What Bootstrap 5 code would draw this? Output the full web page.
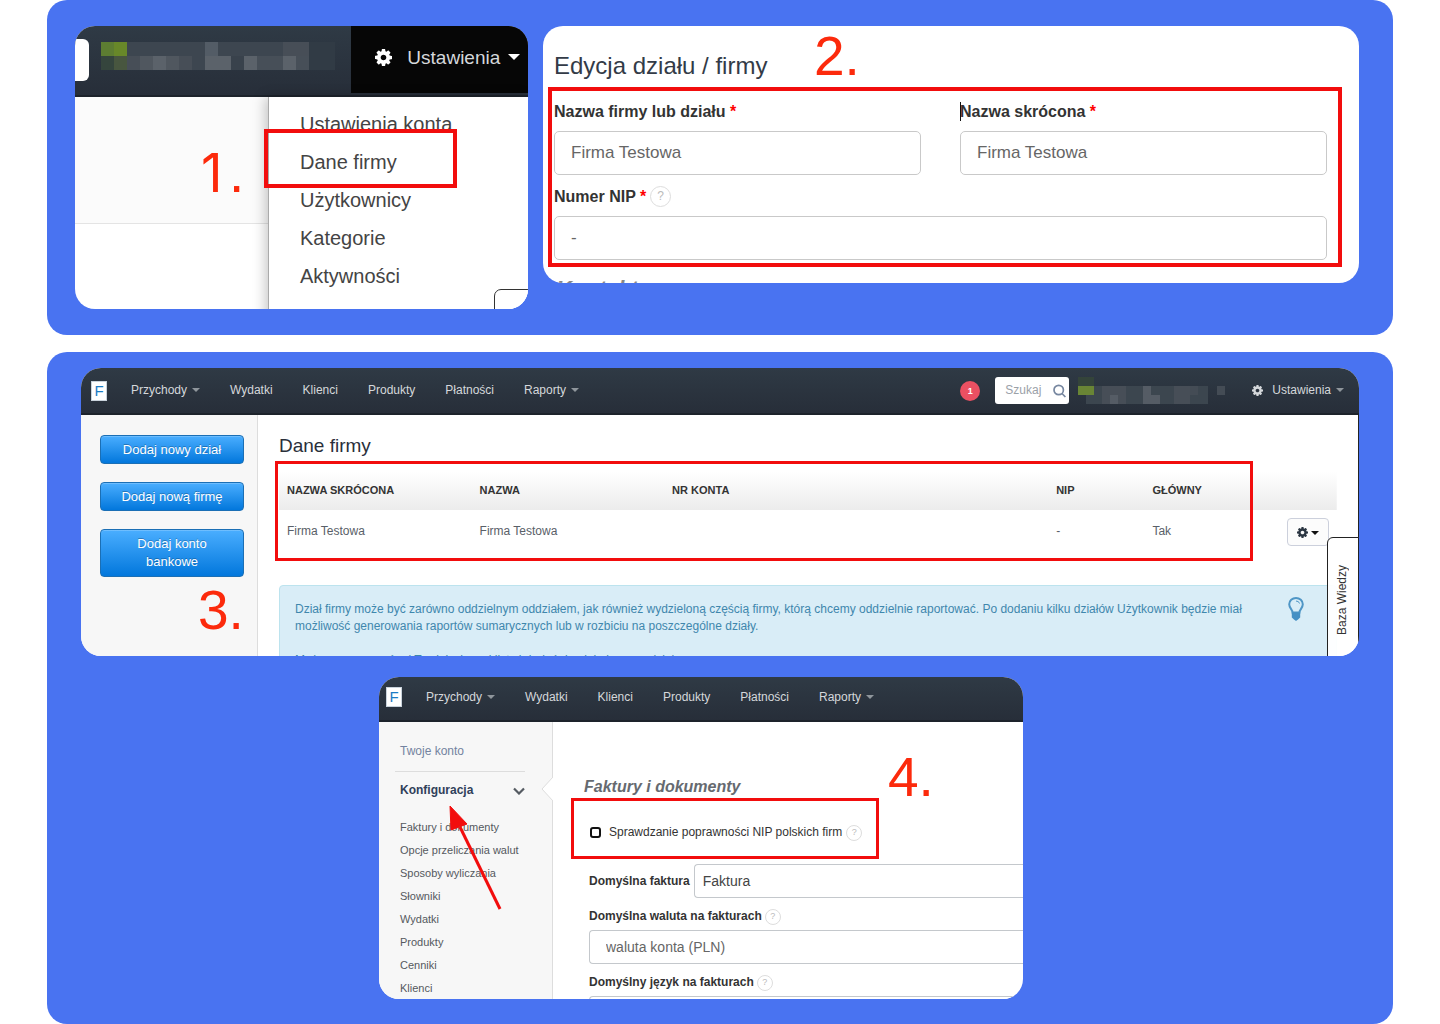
<!DOCTYPE html>
<html lang="pl">
<head>
<meta charset="utf-8">
<meta name="viewport" content="width=device-width, initial-scale=1">
<title>Dane firmy – instrukcja</title>
<link href="https://cdn.jsdelivr.net/npm/bootstrap@5.3.0/dist/css/bootstrap.min.css" rel="stylesheet">
<style>
  body { font-family: "Liberation Sans", Arial, sans-serif; font-size: 12px; line-height: 17px; color: #333; background: #fff; }
  .guide { padding: 0 47px; display: flex; flex-direction: column; gap: 17px; }
  .panel { background: #4973f1; border-radius: 20px; }
  .panel-top { padding: 26px 34px 26px 28px; gap: 15px; }
  .panel-bottom { padding: 16px 34px 25px; gap: 21px; }
  .shot { position: relative; overflow: hidden; background: #fff; border-radius: 20px; }
  .shot-menu { flex: 453 1 0; height: 283px; }
  .shot-form { flex: 816 1 0; height: 257px; }
  .shot-table { height: 288px; }
  .shot-config { width: 644px; height: 322px; margin-right: 38px; }
  .frame { position: absolute; border: 3px solid #f20d0d; pointer-events: none; }
  .frame-thick { border-width: 4px; }
  .step { position: absolute; font-size: 55px; line-height: 60px; color: #fc2a0c; }
  .step-one { display: inline-block; width: 28px; font-family: Inter, sans-serif; font-size: 53px; line-height: 53px; }
  .bar { background: linear-gradient(#2f3a45, #272e39); border-bottom: 2px solid #1d232b; color: #d5d8db; }
  .bar a { color: inherit; text-decoration: none; }
  .tri { display: inline-block; border: 4px solid transparent; border-top-color: #8f969c; border-bottom: 0; margin-left: 5px; vertical-align: 2px; }

  /* step 1 */
  .bar-big { height: 71px; }
  .search-stub { width: 14px; height: 42px; margin-top: 13px; background: #fff; border-radius: 0 6px 6px 0; }
  .mosaic-big { margin: 16px 0 0 12px; }
  .settings-open { background: #060606; color: #eee; font-size: 19px; width: 39%; height: 67px; padding-left: 24px; padding-bottom: 5px; }
  .settings-open svg { margin-right: 15px; color: #fff; }
  .settings-open .tri { border-width: 6px; border-bottom: 0; border-top-color: #fff; margin-left: 8px; vertical-align: 4px; }
  .page-left { width: 42.6%; }
  .page-band { height: 127px; background: #fbfbfb; border-bottom: 1px solid #e4e4e4; }
  .menu-drop { width: 57.4%; background: #fff; border-left: 1px solid #aaa; box-shadow: -3px 0 12px rgba(0,0,0,.22); padding: 8px 0 0 31px; height: 230px; font-size: 20px; line-height: 38px; }
  .menu-drop a { color: #444; text-decoration: none; display: block; }
  .corner-tab { position: absolute; right: -8px; bottom: -8px; width: 42px; height: 28px; border: 1px solid #333; border-radius: 7px; background: #fff; }

  /* step 2 */
  .shot-form form { padding: 25px 32px 0 11px; }
  .shot-form h2 { font-size: 24px; line-height: 30px; margin: 0 0 21px; color: #333b47; }
  .shot-form label { font-size: 16px; line-height: 20px; font-weight: 700; color: #333; }
  .shot-form .form-control { height: 44px; margin-top: 9px; padding: 0 16px; border: 1px solid #c9c9c9; border-radius: 5px; color: #666; font-size: 17px; }
  .field-row { gap: 39px; margin-bottom: 11px; }
  .req { color: #f00; }
  .caret-mark { position: absolute; width: 1px; height: 19px; background: #111; top: 0; left: 0; }
  .hint { display: inline-flex; align-items: center; justify-content: center; width: 16px; height: 16px; border: 1px solid #ddd; border-radius: 50%; color: #bbb; font-size: 9px; line-height: 9px; font-weight: 400; background: #fff; padding: 0; }
  .shot-form .hint { width: 21px; height: 21px; font-size: 12px; margin: 0 0 0 4px; }
  .cut-heading { font-size: 22px; line-height: 26px; font-weight: 700; font-style: italic; color: #888; margin: 16px 0 0 2px; }

  /* step 3 */
  .bar-app { height: 47px; padding: 0 15px 0 10px; }
  .logo-f { width: 16px; height: 20px; background: #fff; border: 1px solid #c9d3dc; color: #1c7cc4; font-size: 15px; line-height: 18px; text-align: center; margin-right: 24px; }
  .links { gap: 30px; }
  .alert-dot { width: 20px; height: 20px; border-radius: 50%; background: #eb5062; color: #fff; font-size: 9px; font-weight: 700; line-height: 20px; text-align: center; margin-right: 15px; }
  .search-box { width: 74px; height: 27px; background: #fff; border-radius: 3px; padding: 0 3px 0 10px; margin-right: 9px; }
  .search-box input { border: 0; padding: 0; width: 44px; color: #999; background: transparent; font-size: 12px; }
  .search-box input::placeholder { color: #9ba1a8; opacity: 1; }
  .settings-link { gap: 9px; }
  .side { background: #f7f7f7; border-right: 1px solid #ddd; }
  .side-buttons { width: 177px; padding: 20px 13px 0 19px; gap: 18px; }
  .btn-blue { background: linear-gradient(#4aaeff, #0277dc); border: 1px solid #1b6fb5; border-radius: 4px; color: #fff; font-size: 13px; line-height: 18px; padding: 5px 16px 4px; text-shadow: 0 -1px 0 rgba(0,0,0,.25); box-shadow: inset 0 1px 0 rgba(255,255,255,.2); }
  .btn-tall { padding: 5px 24px; }
  .shot-table .side { height: 241px; }
  .main-table { padding: 20px 21px 0; border-right: 1px solid #222; }
  .main-table h2 { font-size: 19px; line-height: 22px; color: #2a2f3a; margin: 0 0 15px; }
  .firms { width: 100%; table-layout: fixed; }
  .firms th { height: 38px; padding: 0 8px 2px; font-size: 11px; color: #333; vertical-align: middle; }
  .firms thead { background: linear-gradient(#fff, #ececec); }
  .firms td { height: 43px; padding: 0 8px; color: #596068; vertical-align: middle; }
  .firms td:last-child { padding: 0; }
  .gear-btn { width: 42px; height: 28px; border: 1px solid #ccd0dc; border-radius: 4px; background: #fcfcfc; padding: 0; line-height: 14px; color: #2b3642; }
  .gear-btn .tri { border-top-color: #111; margin-left: 3px; vertical-align: 1px; }
  .info { margin-top: 32px; height: 90px; background: #d9edf7; border: 1px solid #bce3ee; border-radius: 4px; color: #3f87ad; padding: 11px 32px 0 15px; }
  .info p { margin: 4px 0 17px; }
  .kb-tab { position: absolute; right: 0; bottom: -10px; width: 32px; height: 129px; border: 1px solid #222; border-radius: 6px 0 0 0; background: rgba(255,255,255,.94); color: #333; padding: 2px 2px 0 0; }
  .kb-tab span { writing-mode: vertical-rl; transform: rotate(180deg); line-height: 18px; }

  /* step 4 */
  .shot-config .bar-app { height: 45px; padding: 0 7px; }
  .shot-config .logo-f { margin-bottom: 4px; }
  .shot-config .links { margin-bottom: 2px; }
  .side-config { width: 174px; height: 277px; padding: 21px 27px 0 16px; position: relative; }
  .side-config a { display: block; color: #55595e; text-decoration: none; padding-left: 5px; }
  .side-config .acc { color: #7383a0; padding-bottom: 11px; border-bottom: 1px solid #ddd; }
  .side-config .cur { color: #30405a; font-weight: 700; display: flex; justify-content: space-between; align-items: center; margin: 10px 0 17px; }
  .side-list { font-size: 11px; line-height: 23px; }
  .notch { position: absolute; right: -1px; top: 54px; }
  .main-config { padding: 55px 0 0 31px; }
  .main-config h3 { font-size: 16px; line-height: 20px; font-weight: 700; font-style: italic; color: #666a70; margin: 0 0 27px; }
  .opts { padding-left: 5px; }
  .opts label { font-weight: 700; color: #333; }
  .opts .check-label { font-weight: 400; margin: 0 4px 0 8px; }
  .opts input[type=checkbox] { appearance: none; width: 11px; height: 11px; border: 2px solid #111; border-radius: 3px; margin: 0 0 0 1px; background: #fff; }
  .opts .form-select { height: 34px; border: 1px solid #c4c8cc; border-right: 0; border-radius: 4px 0 0 4px; background-image: none; font-size: 14px; line-height: 20px; padding: 0 8px; color: #444; }
  .opts .wide { padding-left: 16px; margin-top: 5px; color: #666; }
  .first-row { margin-top: 23px; }
  .label-row { margin-top: 10px; gap: 3px; }
  .arrow { position: absolute; left: 68px; top: 127px; }
</style>
<script src="https://cdn.jsdelivr.net/npm/bootstrap@5.3.0/dist/js/bootstrap.bundle.min.js"></script>
</head>
<body>
<svg width="0" height="0" class="position-absolute" aria-hidden="true">
  <symbol id="gear" viewBox="128 128 1536 1536"><path fill="currentColor" d="M1152 896q0-106-75-181t-181-75-181 75-75 181 75 181 181 75 181-75 75-181zm512-109v222q0 12-8 23t-20 13l-185 28q-19 54-39 91 35 50 107 138 10 12 10 25t-9 23q-27 37-99 108t-94 71q-12 0-26-9l-138-108q-44 23-91 38-16 136-29 186-7 28-36 28h-222q-14 0-24.5-8.5t-11.5-21.5l-28-184q-49-16-90-37l-141 107q-10 9-25 9-14 0-25-11-126-114-165-168-7-10-7-23 0-12 8-23 15-21 51-66.5t54-70.5q-27-50-41-99l-183-27q-13-2-21-12.5t-8-23.5v-222q0-12 8-23t19-13l186-28q14-46 39-92-40-57-107-138-10-12-10-24 0-10 9-23 26-36 98.5-107.5t94.5-71.5q13 0 26 10l138 107q44-23 91-38 16-136 29-186 7-28 36-28h222q14 0 24.5 8.5t11.5 21.5l28 184q49 16 90 37l142-107q9-9 24-9 13 0 25 10 129 119 165 170 7 8 7 22 0 12-8 23-15 21-51 66.5t-54 70.5q26 50 41 98l183 28q13 2 21 12.5t8 23.5z"/></symbol>
</svg>
<main class="guide">
  <section class="panel panel-top d-flex align-items-start">
    <div class="shot shot-menu">
      <div class="bar bar-big d-flex align-items-start">
        <div class="search-stub"></div>
        <svg class="mosaic-big" width="236" height="28" viewBox="0 0 236 28" shape-rendering="crispEdges" aria-hidden="true">
          <path fill="#3d4650" d="M26 0h182v28H26z"/><path fill="#313b45" d="M208 0h26v28h-26z"/>
          <path fill="#5d7d32" d="M0 0h13v14H0z"/><path fill="#688829" d="M13 0h13v14H13z"/>
          <path fill="#35453d" d="M0 14h13v14H0z"/><path fill="#48563f" d="M13 14h13v14H13z"/>
          <path fill="#474e57" d="M26 14h65v14H26zM182 0h26v14h-26z"/><path fill="#50575f" d="M39 14h39v14H39z"/>
          <path fill="#5b626a" d="M52 14h13v14H52zM104 14h26v14h-26zM143 14h13v14h-13zM182 14h13v14h-13z"/>
          <path fill="#535c66" d="M104 0h13v14h-13z"/><path fill="#474f58" d="M156 14h26v14h-26zM195 14h13v14h-13z"/><path fill="#39424c" d="M130 14h13v14h-13z"/>
        </svg>
        <a href="#" class="settings-open d-flex align-items-center ms-auto"><svg width="17" height="17"><use href="#gear"/></svg><span>Ustawienia<i class="tri"></i></span></a>
      </div>
      <div class="d-flex">
        <div class="page-left"><div class="page-band"></div></div>
        <nav class="menu-drop">
          <a href="#">Ustawienia konta</a><a href="#">Dane firmy</a><a href="#">Użytkownicy</a><a href="#">Kategorie</a><a href="#">Aktywności</a>
        </nav>
      </div>
      <div class="corner-tab"></div>
      <div class="frame frame-thick" style="left:189px;top:103px;width:193px;height:59px"></div>
      <div class="step" style="left:126px;top:117px"><span class="step-one">1</span>.</div>
    </div>

    <div class="shot shot-form">
      <form>
        <h2>Edycja działu / firmy</h2>
        <div class="field-row d-flex">
          <div class="flex-fill">
            <label for="nm" class="d-block">Nazwa firmy lub działu <span class="req">*</span></label>
            <input id="nm" class="form-control" value="Firma Testowa">
          </div>
          <div class="flex-fill position-relative">
            <span class="caret-mark"></span>
            <label for="sh" class="d-block">Nazwa skrócona <span class="req">*</span></label>
            <input id="sh" class="form-control" value="Firma Testowa">
          </div>
        </div>
        <div class="d-flex align-items-center"><label for="nip">Numer NIP <span class="req">*</span></label><button type="button" class="hint">?</button></div>
        <input id="nip" class="form-control" value="-">
        <h3 class="cut-heading">Kontakt</h3>
      </form>
      <div class="frame frame-thick" style="left:5px;right:17px;top:61px;height:180px"></div>
      <div class="step" style="left:271px;top:0">2.</div>
    </div>
  </section>

  <section class="panel panel-bottom d-flex flex-column">
    <div class="shot shot-table">
      <nav class="bar bar-app d-flex align-items-center">
        <div class="logo-f">F</div>
        <div class="links d-flex">
          <a href="#">Przychody<i class="tri"></i></a><a href="#">Wydatki</a><a href="#">Klienci</a><a href="#">Produkty</a><a href="#">Płatności</a><a href="#">Raporty<i class="tri"></i></a>
        </div>
        <div class="alert-dot ms-auto">1</div>
        <div class="search-box d-flex align-items-center justify-content-between">
          <input type="text" placeholder="Szukaj" aria-label="Szukaj">
          <svg width="13" height="14" viewBox="0 0 13 14" fill="none" stroke="#7787a0" stroke-width="1.7"><circle cx="5.7" cy="6" r="4.7"/><path d="M9 9.5l3.4 3.5"/></svg>
        </div>
        <svg class="me-4" width="150" height="28" viewBox="0 0 150 28" shape-rendering="crispEdges" aria-hidden="true">
          <path fill="#34443a" d="M0 0h16v9H0z"/><path fill="#3c464f" d="M16 9h114v9H16zM8 18h122v9H8z"/><path fill="#698535" d="M0 9h16v9H0z"/>
          <path fill="#474e57" d="M24 9h24v18H24zM96 9h16v18H96z"/><path fill="#555c65" d="M65 9h8v9h-8zM65 18h17v9H65zM32 18h8v9h-8z"/><path fill="#444c55" d="M112 9h8v9h-8zM139 9h8v9h-8z"/>
        </svg>
        <a href="#" class="settings-link d-flex align-items-center"><svg width="11" height="11"><use href="#gear"/></svg><span>Ustawienia<i class="tri"></i></span></a>
      </nav>
      <div class="d-flex">
        <aside class="side side-buttons d-flex flex-column flex-shrink-0">
          <button class="btn btn-blue">Dodaj nowy dział</button>
          <button class="btn btn-blue">Dodaj nową firmę</button>
          <button class="btn btn-blue btn-tall">Dodaj konto bankowe</button>
        </aside>
        <div class="main-table flex-grow-1">
          <h2>Dane firmy</h2>
          <table class="firms">
            <colgroup><col style="width:18.2%"><col style="width:18.2%"><col style="width:36.3%"><col style="width:9.1%"><col style="width:13.5%"><col style="width:4.7%"></colgroup>
            <thead><tr><th>NAZWA SKRÓCONA</th><th>NAZWA</th><th>NR KONTA</th><th>NIP</th><th>GŁÓWNY</th><th></th></tr></thead>
            <tbody><tr><td>Firma Testowa</td><td>Firma Testowa</td><td></td><td>-</td><td>Tak</td><td><button class="gear-btn" aria-label="Opcje"><svg width="11" height="11"><use href="#gear"/></svg><i class="tri"></i></button></td></tr></tbody>
          </table>
          <div class="info d-flex justify-content-between align-items-start">
            <div>
              <p>Dział firmy może być zarówno oddzielnym oddziałem, jak również wydzieloną częścią firmy, którą chcemy oddzielnie raportować. Po dodaniu kilku działów Użytkownik będzie miał<br>możliwość generowania raportów sumarycznych lub w rozbiciu na poszczególne działy.</p>
              <p>Możesz rozpocząć od Twojej własnej listy i dodać do niej pierwszy dział</p>
            </div>
            <svg class="flex-shrink-0" width="16" height="24" viewBox="0 0 16 24"><path d="M4.5 15.5C4.5 12.500 1.200 11 1.200 7.300a6.800 6.300 0 0 1 13.600 0c0 3.700-3.300 5.200-3.300 8.200z" fill="none" stroke="#4f96c6" stroke-width="2"/><path d="M8 4q3 0 3.500 2.500" fill="none" stroke="#4f96c6"/><path d="M3.800 15.500h8.400v5L10 22.500 8 24l-2-1.500-2.200-2z" fill="#4590c4"/></svg>
          </div>
        </div>
      </div>
      <button class="kb-tab"><span>Baza Wiedzy</span></button>
      <div class="frame" style="left:194px;right:106px;top:93px;height:100px"></div>
      <div class="step" style="left:117px;top:212px">3.</div>
    </div>

    <div class="shot shot-config align-self-center">
      <nav class="bar bar-app d-flex align-items-center">
        <div class="logo-f">F</div>
        <div class="links d-flex">
          <a href="#">Przychody<i class="tri"></i></a><a href="#">Wydatki</a><a href="#">Klienci</a><a href="#">Produkty</a><a href="#">Płatności</a><a href="#">Raporty<i class="tri"></i></a>
        </div>
      </nav>
      <div class="d-flex">
        <aside class="side side-config flex-shrink-0">
          <a href="#" class="acc">Twoje konto</a>
          <a href="#" class="cur">Konfiguracja<svg width="12" height="8" viewBox="0 0 12 8" fill="none" stroke="#555b62" stroke-width="2.200"><path d="M1 1.500l5 5 5-5"/></svg></a>
          <div class="side-list">
            <a href="#">Faktury i dokumenty</a><a href="#">Opcje przeliczania walut</a><a href="#">Sposoby wyliczania</a><a href="#">Słowniki</a><a href="#">Wydatki</a><a href="#">Produkty</a><a href="#">Cenniki</a><a href="#">Klienci</a>
          </div>
          <svg class="notch" width="12" height="26" viewBox="0 0 12 26"><path d="M12 1L1 13l11 12" fill="#fff" stroke="#ddd"/></svg>
        </aside>
        <div class="main-config flex-grow-1">
          <h3>Faktury i dokumenty</h3>
          <div class="opts">
            <div class="d-flex align-items-center"><input type="checkbox" id="chk"><label for="chk" class="check-label">Sprawdzanie poprawności NIP polskich firm</label><button class="hint">?</button></div>
            <div class="first-row d-flex align-items-center">
              <label for="inv" class="text-nowrap me-1">Domyślna faktura</label>
              <select id="inv" class="form-select"><option>Faktura</option></select>
            </div>
            <div class="label-row d-flex align-items-center"><label for="cur">Domyślna waluta na fakturach</label><button class="hint">?</button></div>
            <select id="cur" class="form-select wide"><option>waluta konta (PLN)</option></select>
            <div class="label-row d-flex align-items-center"><label for="lng">Domyślny język na fakturach</label><button class="hint">?</button></div>
            <select id="lng" class="form-select wide"><option>polski</option></select>
          </div>
        </div>
      </div>
      <div class="frame" style="left:192px;top:121px;width:308px;height:61px"></div>
      <svg class="arrow" width="60" height="110" viewBox="0 0 60 110"><path d="M53 105L13 23" stroke="#f20d0d" stroke-width="3"/><path d="M3 2L20 20 4 26z" fill="#f20d0d" stroke="#f20d0d"/></svg>
      <div class="step" style="left:509px;top:70px">4.</div>
    </div>
  </section>
</main>
</body>
</html>
